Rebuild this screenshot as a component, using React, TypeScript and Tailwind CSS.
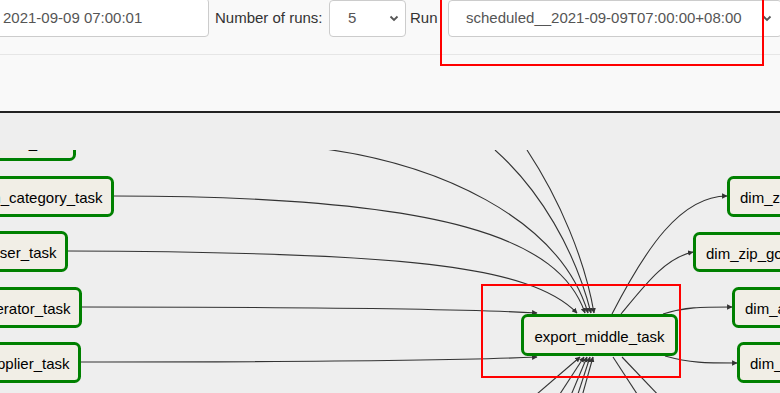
import React from "react";

const FONT = "'Liberation Sans', Arial, sans-serif";

type NodeProps = {
  x1: number;
  x2: number;
  y1: number;
  y2: number;
  label: string;
  align: "start" | "middle" | "end";
};

// outer bounds include the 3px green stroke
function TaskNode({ x1, x2, y1, y2, label, align }: NodeProps) {
  const tx = align === "end" ? x2 - 11.5 : align === "start" ? x1 + 13 : (x1 + x2) / 2;
  const cy = (y1 + y2) / 2;
  return (
    <g>
      <rect
        x={x1 + 1.5}
        y={y1 + 1.5}
        width={x2 - x1 - 3}
        height={y2 - y1 - 3}
        rx={5}
        fill="#f1eee6"
        stroke="#008000"
        strokeWidth={3}
      />
      <text x={tx} y={cy + 6.5} textAnchor={align} fontSize={15} fill="#000" fontFamily={FONT}>
        {label}
      </text>
    </g>
  );
}

const nodes: NodeProps[] = [
  { x1: -120, x2: 76, y1: 121, y2: 161, label: "dim_date_task", align: "end" },
  { x1: -120, x2: 114, y1: 176, y2: 217, label: "dim_category_task", align: "end" },
  { x1: -120, x2: 68, y1: 231, y2: 272, label: "dim_user_task", align: "end" },
  { x1: -120, x2: 82, y1: 287, y2: 328, label: "dim_operator_task", align: "end" },
  { x1: -120, x2: 81, y1: 342, y2: 383, label: "dim_supplier_task", align: "end" },
  { x1: 521, x2: 678, y1: 314, y2: 356, label: "export_middle_task", align: "middle" },
  { x1: 727, x2: 960, y1: 176, y2: 217, label: "dim_zone_task", align: "start" },
  { x1: 693, x2: 960, y1: 232, y2: 272, label: "dim_zip_gov_task", align: "start" },
  { x1: 732, x2: 960, y1: 287, y2: 328, label: "dim_area_task", align: "start" },
  { x1: 737, x2: 960, y1: 342, y2: 383, label: "dim_shop_task", align: "start" },
];

// edges ending with an arrowhead
const arrowEdges = [
  "M 300,146 C 440,160 560,220 588,313",
  "M 114,196 C 450,196 560,240 585,313",
  "M 68,251 C 400,252 530,265 577,313",
  "M 82,307 C 300,307 450,308 537,313",
  "M 81,362 C 300,362 450,361 537,357",
  "M 495,150 C 540,190 575,250 591,313",
  "M 527,150 C 560,200 585,260 594,313",
  "M 612,314 C 645,250 680,196 727,196",
  "M 621,314 C 645,285 665,258 693,252",
  "M 663,314 C 685,307 700,307 732,307",
  "M 665,356 C 690,363 705,363 737,363",
  "M 530,400 L 580,357",
  "M 556,400 L 584,357",
  "M 569,400 L 587,357",
  "M 576,400 L 590,357",
  "M 581,400 L 593,357",
];

const plainEdges = ["M 613,357 L 641,400", "M 622,357 L 663,400"];

function Chevron() {
  return (
    <svg width="10" height="7" viewBox="0 0 10 7" className="shrink-0">
      <polyline points="1.5,1.5 5,5 8.5,1.5" fill="none" stroke="#555" strokeWidth="1.8" />
    </svg>
  );
}

export default function App() {
  return (
    <div
      className="relative w-[780px] h-[393px] overflow-hidden bg-[#eeeeee]"
      style={{ fontFamily: FONT }}
    >
      <div className="h-[113px] bg-[#f9f9f9] border-b-2 border-[#222]">
        <div className="flex items-start h-[55px] border-b border-[#e6e6e6] text-[15px]">
          <div className="-ml-[10px] -mt-[2px] h-[39px] w-[219px] shrink-0 flex items-center pl-[12px] pt-[1px] bg-white border border-[#ccc] rounded-[4px] text-[#555]">
            2021-09-09 07:00:01
          </div>
          <span className="w-[120px] h-[37px] shrink-0 flex items-center pl-[6px] text-[#333]">
            Number of runs:
          </span>
          <div className="w-[77px] h-[37px] shrink-0 flex items-center justify-between pl-[18px] pr-[6px] bg-white border border-[#ccc] rounded-[4px] text-[#555]">
            <span>5</span>
            <Chevron />
          </div>
          <span className="w-[42px] h-[37px] shrink-0 flex items-center pl-[4px] text-[#333]">Run</span>
          <div className="w-[334px] h-[37px] shrink-0 flex items-center justify-between pl-[17px] pr-[9px] bg-white border border-[#ccc] rounded-[4px] text-[#555]">
            <span>scheduled__2021-09-09T07:00:00+08:00</span>
            <Chevron />
          </div>
        </div>
      </div>

      <svg width="780" height="280" viewBox="0 113 780 280" className="block">
        <defs>
          <marker
            id="arrow"
            viewBox="0 0 10 10"
            refX="9"
            refY="5"
            markerWidth="5.5"
            markerHeight="5.5"
            markerUnits="userSpaceOnUse"
            orient="auto"
          >
            <path d="M0,0 L10,5 L0,10 z" fill="#333" />
          </marker>
          <clipPath id="graph-clip">
            <rect x="0" y="150" width="780" height="250" />
          </clipPath>
        </defs>
        <g clipPath="url(#graph-clip)">
          {arrowEdges.map((d, i) => (
            <path key={i} d={d} fill="none" stroke="#333" strokeWidth={1.1} markerEnd="url(#arrow)" />
          ))}
          {plainEdges.map((d, i) => (
            <path key={i} d={d} fill="none" stroke="#333" strokeWidth={1.1} />
          ))}
          {nodes.map((n) => (
            <TaskNode key={n.label} {...n} />
          ))}
        </g>
      </svg>

      {/* highlight boxes drawn over the page */}
      <div className="absolute left-[440px] -top-[4px] w-[324px] h-[70px] border-2 border-[#ff0000]" />
      <div className="absolute left-[481px] top-[284px] w-[200px] h-[94px] border-2 border-[#ff0000]" />
    </div>
  );
}
